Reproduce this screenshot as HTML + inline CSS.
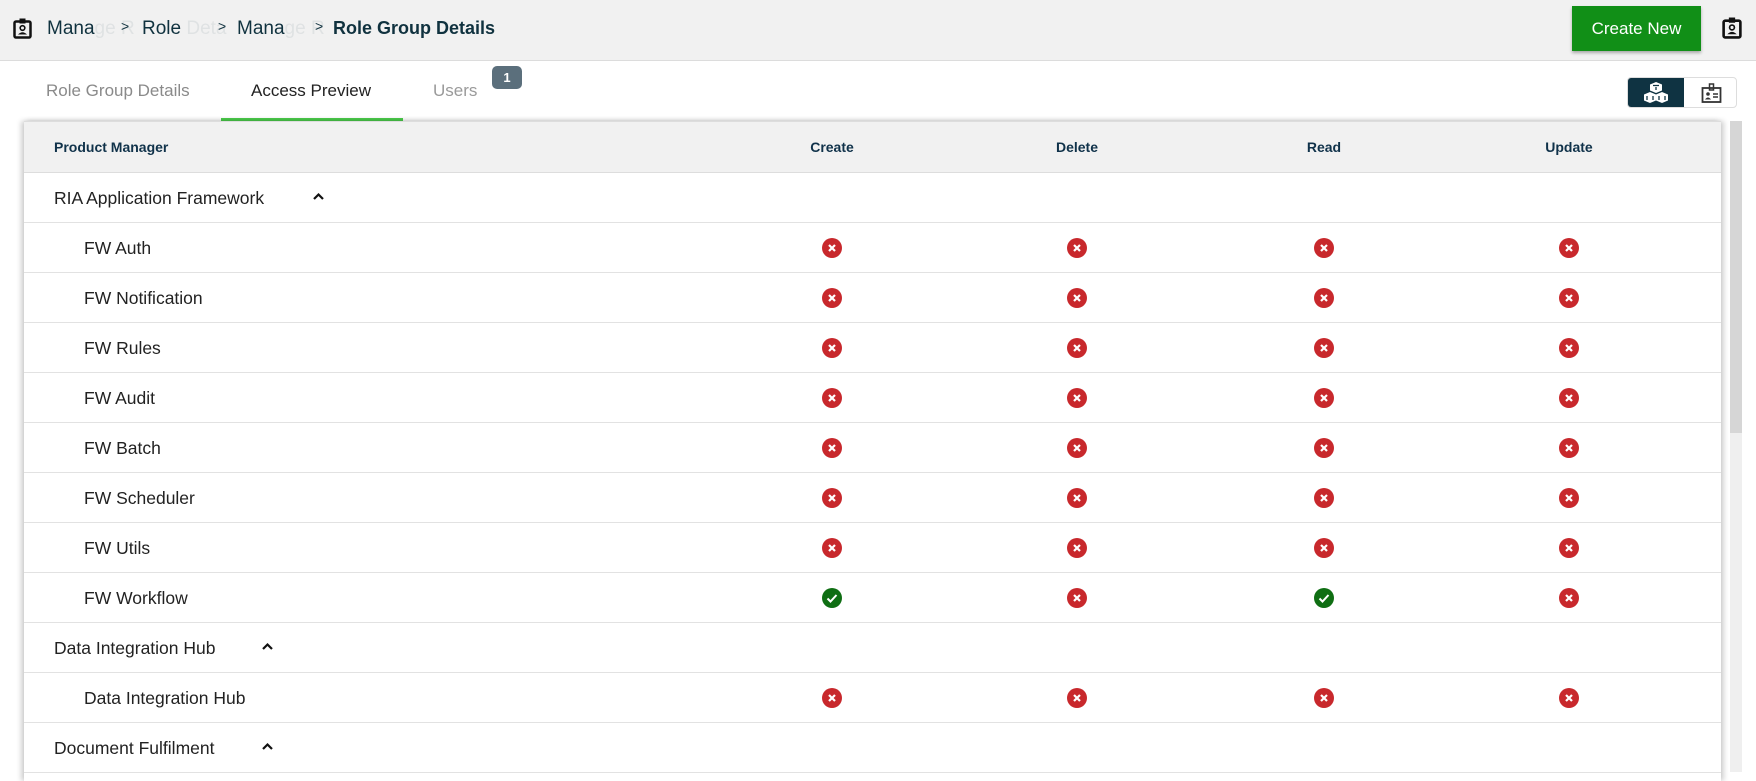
<!DOCTYPE html>
<html><head><meta charset="utf-8">
<style>
*{box-sizing:border-box;margin:0;padding:0}
body{width:1756px;height:772px;overflow:hidden;background:#fff;font-family:"Liberation Sans",Arial,sans-serif;position:relative}
.top{position:absolute;left:0;top:0;width:1756px;height:61px;background:#f1f1f1;border-bottom:1px solid #dcdcdc}
.abs{position:absolute}
.bc{position:absolute;top:18px;font-size:19px;color:#10323f;white-space:nowrap}
.fade{color:rgba(16,50,63,0.08)}
.sep{position:absolute;top:18px;font-size:14px;color:#10323f}
.btn{position:absolute;left:1572px;top:6px;width:129px;height:45px;background:#118f17;color:#fff;font-size:17px;line-height:45px;text-align:center;box-shadow:0 2px 3px rgba(0,0,0,.3)}
.tab{position:absolute;top:81px;font-size:17px;white-space:nowrap}
.tbl{position:absolute;left:24px;top:121px;width:1697px;height:660px;background:#fff;box-shadow:-3px 0 5px rgba(0,0,0,.18),3px 0 5px rgba(0,0,0,.18)}
.hdr{position:absolute;left:0;top:0;width:1697px;height:52px;background:#f1f1f1;border-bottom:1px solid #ddd;border-top:1px solid #ddd}
.hl{position:absolute;top:17px;font-size:14px;font-weight:bold;color:#10324a}
.row{position:absolute;left:0;width:1697px;height:50px;border-bottom:1.5px solid #e2e2e2}
.row span.t{position:absolute;top:15px;font-size:17.5px;color:#222;white-space:nowrap}
.ic{position:absolute;top:15px;width:20px;height:20px;border-radius:50%}
.x{background:#c8282c}
.ok{background:#0f6e13}
.ic svg{position:absolute;left:0;top:0}
.chev{position:absolute;top:18px}
</style></head><body>
<div class="top">
 <svg class="abs" style="left:13px;top:18px" width="19" height="21" viewBox="0 0 19 21"><rect x="1.5" y="3.5" width="16" height="16" rx="1.5" fill="none" stroke="#111" stroke-width="2.5"/><rect x="6.5" y="0.5" width="6" height="5" fill="#111"/><circle cx="9.5" cy="10" r="2.3" fill="none" stroke="#111" stroke-width="1.6"/><path d="M5 16.5 Q9.5 12 14 16.5Z" fill="#111"/></svg>
 <div class="bc" style="left:47px">Mana<span class="fade">ge R</span></div>
 <div class="sep" style="left:121px">&gt;</div>
 <div class="bc" style="left:142px">Role <span class="fade">Deta</span></div>
 <div class="sep" style="left:218px">&gt;</div>
 <div class="bc" style="left:237px">Mana<span class="fade">ge R</span></div>
 <div class="sep" style="left:315px">&gt;</div>
 <div class="bc" style="left:333px;font-size:18px;font-weight:bold">Role Group Details</div>
 <div class="btn">Create New</div>
 <svg class="abs" style="left:1722px;top:17px" width="20" height="22" viewBox="0 0 19 21"><rect x="1.5" y="3.5" width="16" height="16" rx="1.5" fill="none" stroke="#111" stroke-width="2.5"/><rect x="6.5" y="0.5" width="6" height="5" fill="#111"/><circle cx="9.5" cy="10" r="2.3" fill="none" stroke="#111" stroke-width="1.6"/><path d="M5 16.5 Q9.5 12 14 16.5Z" fill="#111"/></svg>
</div>
<div class="tab" style="left:46px;color:#8a8a8a">Role Group Details</div>
<div class="tab" style="left:251px;color:#222">Access Preview</div>
<div class="abs" style="left:221px;top:118px;width:182px;height:3px;background:#4ccf4c"></div>
<div class="tab" style="left:433px;color:#9a9a9a">Users</div>
<div class="abs" style="left:492px;top:66px;width:30px;height:23px;border-radius:5px;background:#5b6f7c;color:#fff;font-size:13px;font-weight:bold;text-align:center;line-height:23px">1</div>
<div class="abs" style="left:1627px;top:77px;width:110px;height:31px;border:1px solid #ddd;border-radius:4px;overflow:hidden">
 <div class="abs" style="left:0;top:0;width:56px;height:31px;background:#0f3342"></div>
 <svg class="abs" style="left:15px;top:3px" width="26" height="24" viewBox="0 0 26 24"><path d="M13 1 L19 3.5 V9.5 L13 12 L7 9.5 V3.5Z" fill="#fff"/><path d="M7 11 L13 13.5 V19.5 L7 22 L1 19.5 V13.5Z" fill="#fff"/><path d="M19 11 L25 13.5 V19.5 L19 22 L13 19.5 V13.5Z" fill="#fff"/><path d="M4 15v4M10 15v4M16 15v4M22 15v4M10 4.5h6M13 6v3" stroke="#0f3342" stroke-width="1.3"/></svg>
 <svg class="abs" style="left:73px;top:5px" width="21" height="21" viewBox="0 0 21 21"><rect x="1.5" y="5" width="18" height="14" fill="none" stroke="#333" stroke-width="1.8"/><rect x="8.5" y="1" width="4" height="6" fill="none" stroke="#333" stroke-width="1.5"/><circle cx="7" cy="11" r="1.8" fill="#333"/><path d="M4 16.5 Q7 12.5 10 16.5Z" fill="#333"/><path d="M12 11h5M12 14h5" stroke="#333" stroke-width="1.5"/></svg>
</div>
<div class="abs" style="left:1730px;top:121px;width:12px;height:312px;background:#d6d6d6"></div>
<div class="abs" style="left:1730px;top:433px;width:12px;height:339px;background:#efefef"></div>
<div class="tbl">
 <div class="hdr">
  <div class="hl" style="left:30px">Product Manager</div>
  <div class="hl" style="left:778px;width:60px;text-align:center">Create</div>
  <div class="hl" style="left:1023px;width:60px;text-align:center">Delete</div>
  <div class="hl" style="left:1270px;width:60px;text-align:center">Read</div>
  <div class="hl" style="left:1515px;width:60px;text-align:center">Update</div>
 </div>
 <div id="rows"></div>
</div>
<script>
var X='<svg width="20" height="20" viewBox="0 0 20 20"><path d="M7 7l6 6M13 7l-6 6" stroke="#fff" stroke-width="2.2"/></svg>';
var C='<svg width="20" height="20" viewBox="0 0 20 20"><path d="M5.5 10.5l3 3 6-6.5" fill="none" stroke="#fff" stroke-width="2"/></svg>';
var rows=[["g","RIA Application Framework",288],["c","FW Auth","xxxx"],["c","FW Notification","xxxx"],["c","FW Rules","xxxx"],["c","FW Audit","xxxx"],["c","FW Batch","xxxx"],["c","FW Scheduler","xxxx"],["c","FW Utils","xxxx"],["c","FW Workflow","vxvx"],["g","Data Integration Hub",237],["c","Data Integration Hub","xxxx"],["g","Document Fulfilment",237]];
var cx=[808,1053,1300,1545],h='';
rows.forEach(function(r,i){
 var top=52+i*50;
 h+='<div class="row" style="top:'+top+'px">';
 if(r[0]=="g"){h+='<span class="t" style="left:30px">'+r[1]+'</span><svg class="chev" style="left:'+r[2]+'px" width="13" height="10" viewBox="0 0 13 10"><path d="M2 8 L6.5 3.5 L11 8" fill="none" stroke="#111" stroke-width="2.2"/></svg>';}
 else{h+='<span class="t" style="left:60px">'+r[1]+'</span>';
  for(var k=0;k<4;k++){var v=r[2][k]=="v";h+='<div class="ic '+(v?'ok':'x')+'" style="left:'+(cx[k]-10)+'px">'+(v?C:X)+'</div>';}}
 h+='</div>';
});
document.getElementById('rows').innerHTML=h;
</script>
</body></html>
